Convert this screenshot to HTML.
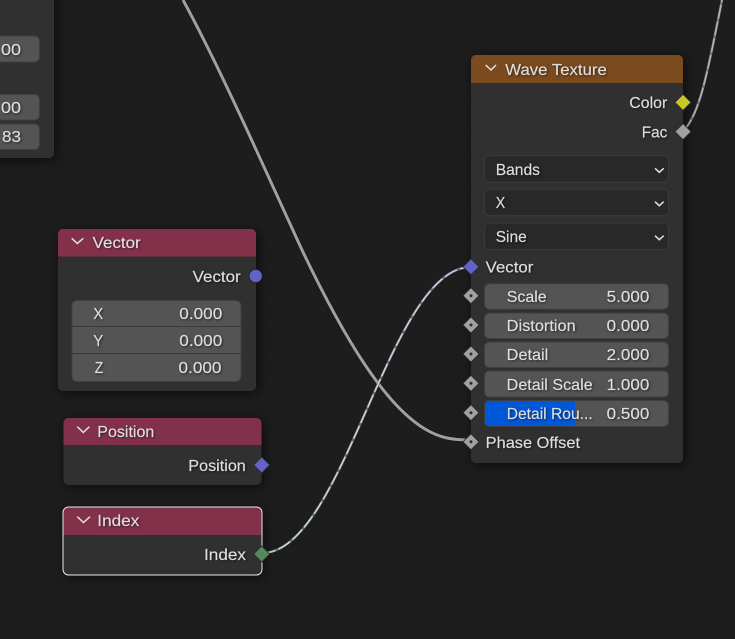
<!DOCTYPE html>
<html>
<head>
<meta charset="utf-8">
<style>
html,body{margin:0;padding:0;background:#1d1d1d;width:735px;height:639px;overflow:hidden}
svg{display:block}
text{font-family:"Liberation Sans",sans-serif;font-size:16px;fill:#dedede;stroke:#dedede;stroke-width:.18}
.t{filter:drop-shadow(1px 1px 1px rgba(0,0,0,.55))}
.s{filter:drop-shadow(2px 2px 6px rgba(0,0,0,.6))}
.f{fill:#545454;stroke:#404040;stroke-width:1}
.d{fill:#282828;stroke:#3a3a3a;stroke-width:1}
.c{fill:none;stroke:#e2e2e2;stroke-width:1.5}
.so{stroke:#2a2a2a;stroke-width:.8}
</style>
</head>
<body>
<svg width="735" height="639" viewBox="0 0 735 639" xmlns="http://www.w3.org/2000/svg">
<defs>
<pattern id="g" x="184" y="15" width="28.3" height="28.3" patternUnits="userSpaceOnUse"><rect x="0" y="0" width="1" height="1" fill="#242424"/></pattern>
<linearGradient id="w1" gradientUnits="userSpaceOnUse" x1="262" y1="553" x2="471" y2="267"><stop offset="0" stop-color="#c4dcc7"/><stop offset="1" stop-color="#c8c8f0"/></linearGradient>
<clipPath id="bl"><rect x="485" y="401" width="90" height="25"/></clipPath>
</defs>
<rect width="735" height="639" fill="#1d1d1d"/>
<rect width="735" height="639" fill="url(#g)"/>

<!-- wires -->
<path d="M183,0 C200,31 220,71 253,143 L302,250 C345,340 385,405 425,429 C440,438 452,440 471,440" fill="none" stroke="#111" stroke-width="4.5" opacity=".5"/>
<path d="M183,0 C200,31 220,71 253,143 L302,250 C345,340 385,405 425,429 C440,438 452,440 471,440" fill="none" stroke="#a0a0a0" stroke-width="3"/>
<path d="M262,553 C344,553 389,267 471,267" fill="none" stroke="#6a6a6a" stroke-width="2.4"/>
<path d="M262,553 C344,553 389,267 471,267" fill="none" stroke="url(#w1)" stroke-width="1.6" stroke-dasharray="14 3"/>
<path d="M683,131 C700,115 708,70 722,0" fill="none" stroke="#777" stroke-width="2.4"/>
<path d="M683,131 C700,115 708,70 722,0" fill="none" stroke="#b5b5b5" stroke-width="1.5" stroke-dasharray="14 3"/>

<!-- top-left node -->
<g class="s"><rect x="-20" y="-20" width="74" height="178" rx="5" fill="#303030"/></g>
<rect class="f" x="-20" y="36" width="59.5" height="26" rx="5"/>
<rect class="f" x="-20" y="94.5" width="59.5" height="25.5" rx="5"/>
<rect class="f" x="-20" y="124" width="59.5" height="25.5" rx="5"/>
<g class="t">
<text x="1" y="55" textLength="20" lengthAdjust="spacingAndGlyphs">00</text>
<text x="1" y="113" textLength="20" lengthAdjust="spacingAndGlyphs">00</text>
<text x="2" y="142" textLength="19" lengthAdjust="spacingAndGlyphs">83</text>
</g>

<!-- Vector node -->
<g class="s"><rect x="58" y="229" width="198" height="162" rx="5" fill="#303030"/></g>
<path d="M58,256.5 V234 a5,5 0 0 1 5,-5 H251 a5,5 0 0 1 5,5 V256.5 Z" fill="#83314a"/>
<rect class="f" x="72" y="300.5" width="169" height="81" rx="5"/>
<path d="M72,326.5 H241 M72,353.5 H241" stroke="#3a3a3a" stroke-width="1"/>
<polyline class="c" points="71.7,238.3 77.3,243.5 83.3,238.3"/>
<circle class="so" cx="255.7" cy="276" r="6.5" fill="#6363c7"/>
<g class="t">
<text x="92.7" y="248" textLength="48" lengthAdjust="spacingAndGlyphs">Vector</text>
<text x="192.7" y="282" textLength="48" lengthAdjust="spacingAndGlyphs">Vector</text>
<text x="93.3" y="319" textLength="10" lengthAdjust="spacingAndGlyphs">X</text>
<text x="93.3" y="346" textLength="10" lengthAdjust="spacingAndGlyphs">Y</text>
<text x="94.7" y="373" textLength="8.5" lengthAdjust="spacingAndGlyphs">Z</text>
<text x="179.3" y="319" textLength="43" lengthAdjust="spacingAndGlyphs">0.000</text>
<text x="179.3" y="346" textLength="43" lengthAdjust="spacingAndGlyphs">0.000</text>
<text x="178.5" y="373" textLength="43" lengthAdjust="spacingAndGlyphs">0.000</text>
</g>

<!-- Position node -->
<g class="s"><rect x="63.5" y="418" width="198" height="67" rx="5" fill="#303030"/></g>
<path d="M63.5,445 V423 a5,5 0 0 1 5,-5 H256.5 a5,5 0 0 1 5,5 V445 Z" fill="#83314a"/>
<polyline class="c" points="77.3,426.7 83.3,432.5 89.3,426.7"/>
<path class="so" d="M261.7,457 L269.7,465 L261.7,473 L253.7,465 Z" fill="#6363c7"/>
<g class="t">
<text x="97.3" y="437" textLength="57" lengthAdjust="spacingAndGlyphs">Position</text>
<text x="188.3" y="471" textLength="57.5" lengthAdjust="spacingAndGlyphs">Position</text>
</g>

<!-- Index node -->
<g class="s"><rect x="63" y="507" width="199" height="68" rx="5.5" fill="#303030"/></g>
<path d="M63,535 V512.5 a5.5,5.5 0 0 1 5.5,-5.5 H256.5 a5.5,5.5 0 0 1 5.5,5.5 V535 Z" fill="#83314a"/>
<rect x="63" y="507" width="199" height="68" rx="5.5" fill="none" stroke="#e8e8e8" stroke-width="1"/>
<polyline class="c" points="77.3,516.7 83.5,522.5 90,516.7"/>
<path class="so" d="M261.7,546 L269.7,554 L261.7,562 L253.7,554 Z" fill="#56895a"/>
<g class="t">
<text x="97.3" y="526" textLength="42" lengthAdjust="spacingAndGlyphs">Index</text>
<text x="204" y="560" textLength="42" lengthAdjust="spacingAndGlyphs">Index</text>
</g>

<!-- Wave Texture node -->
<g class="s"><rect x="471" y="55" width="212" height="408" rx="5" fill="#303030"/></g>
<path d="M471,83 V60 a5,5 0 0 1 5,-5 H678 a5,5 0 0 1 5,5 V83 Z" fill="#7b4a1f"/>
<polyline class="c" points="485.7,65 491,70 496,65"/>
<rect class="d" x="484.5" y="155.7" width="184" height="26.5" rx="5"/>
<rect class="d" x="484.5" y="189.3" width="184" height="26.5" rx="5"/>
<rect class="d" x="484.5" y="223" width="184" height="26.5" rx="5"/>
<polyline class="c" points="655,168.3 659.3,172.3 663.7,168.3"/>
<polyline class="c" points="655,201.7 659.3,205.7 663.7,201.7"/>
<polyline class="c" points="655,235.7 659.3,239.7 663.7,235.7"/>
<rect class="f" x="484.5" y="283.7" width="184" height="25.5" rx="5"/>
<rect class="f" x="484.5" y="313" width="184" height="25.5" rx="5"/>
<rect class="f" x="484.5" y="342" width="184" height="25.5" rx="5"/>
<rect class="f" x="484.5" y="371" width="184" height="26" rx="5"/>
<rect class="f" x="484.5" y="400.5" width="184" height="26" rx="5"/>
<rect x="485" y="401" width="100" height="25" rx="4.5" fill="#0058d8" clip-path="url(#bl)"/>
<!-- sockets -->
<path class="so" d="M683,94.4 L691,102.4 L683,110.4 L675,102.4 Z" fill="#c7c729"/>
<path class="so" d="M683,123.6 L691,131.6 L683,139.6 L675,131.6 Z" fill="#a1a1a1"/>
<path class="so" d="M471,258.8 L479,266.8 L471,274.8 L463,266.8 Z" fill="#6363c7"/>
<g fill="#a1a1a1" class="so">
<path d="M471,287.7 L479,295.7 L471,303.7 L463,295.7 Z"/>
<path d="M471,317 L479,325 L471,333 L463,325 Z"/>
<path d="M471,346 L479,354 L471,362 L463,354 Z"/>
<path d="M471,375.3 L479,383.3 L471,391.3 L463,383.3 Z"/>
<path d="M471,404.7 L479,412.7 L471,420.7 L463,412.7 Z"/>
<path d="M471,433.8 L479,441.8 L471,449.8 L463,441.8 Z"/>
</g>
<g fill="#2a2a2a">
<circle cx="471" cy="295.7" r="1.5"/><circle cx="471" cy="325" r="1.5"/><circle cx="471" cy="354" r="1.5"/>
<circle cx="471" cy="383.3" r="1.5"/><circle cx="471" cy="412.7" r="1.5"/><circle cx="471" cy="441.8" r="1.5"/>
</g>
<g class="t">
<text x="505.3" y="75" textLength="101.5" lengthAdjust="spacingAndGlyphs">Wave Texture</text>
<text x="629.3" y="108" textLength="38" lengthAdjust="spacingAndGlyphs">Color</text>
<text x="641.7" y="137.5" textLength="25.6" lengthAdjust="spacingAndGlyphs">Fac</text>
<text x="495.7" y="175" textLength="44.3" lengthAdjust="spacingAndGlyphs">Bands</text>
<text x="495.7" y="208" textLength="9.5" lengthAdjust="spacingAndGlyphs">X</text>
<text x="495.7" y="242" textLength="31" lengthAdjust="spacingAndGlyphs">Sine</text>
<text x="485.7" y="272.5" textLength="47.6" lengthAdjust="spacingAndGlyphs">Vector</text>
<text x="506.7" y="302" textLength="40" lengthAdjust="spacingAndGlyphs">Scale</text>
<text x="606.7" y="302" textLength="42.6" lengthAdjust="spacingAndGlyphs">5.000</text>
<text x="506.7" y="331" textLength="69" lengthAdjust="spacingAndGlyphs">Distortion</text>
<text x="606.7" y="331" textLength="42.6" lengthAdjust="spacingAndGlyphs">0.000</text>
<text x="506.7" y="360" textLength="41.6" lengthAdjust="spacingAndGlyphs">Detail</text>
<text x="606.7" y="360" textLength="42.6" lengthAdjust="spacingAndGlyphs">2.000</text>
<text x="506.7" y="390" textLength="86" lengthAdjust="spacingAndGlyphs">Detail Scale</text>
<text x="606.7" y="390" textLength="42.6" lengthAdjust="spacingAndGlyphs">1.000</text>
<text x="506.7" y="419" textLength="86" lengthAdjust="spacingAndGlyphs">Detail Rou...</text>
<text x="606.7" y="419" textLength="42.6" lengthAdjust="spacingAndGlyphs">0.500</text>
<text x="485.7" y="448" textLength="94.3" lengthAdjust="spacingAndGlyphs">Phase Offset</text>
</g>
</svg>
</body>
</html>
